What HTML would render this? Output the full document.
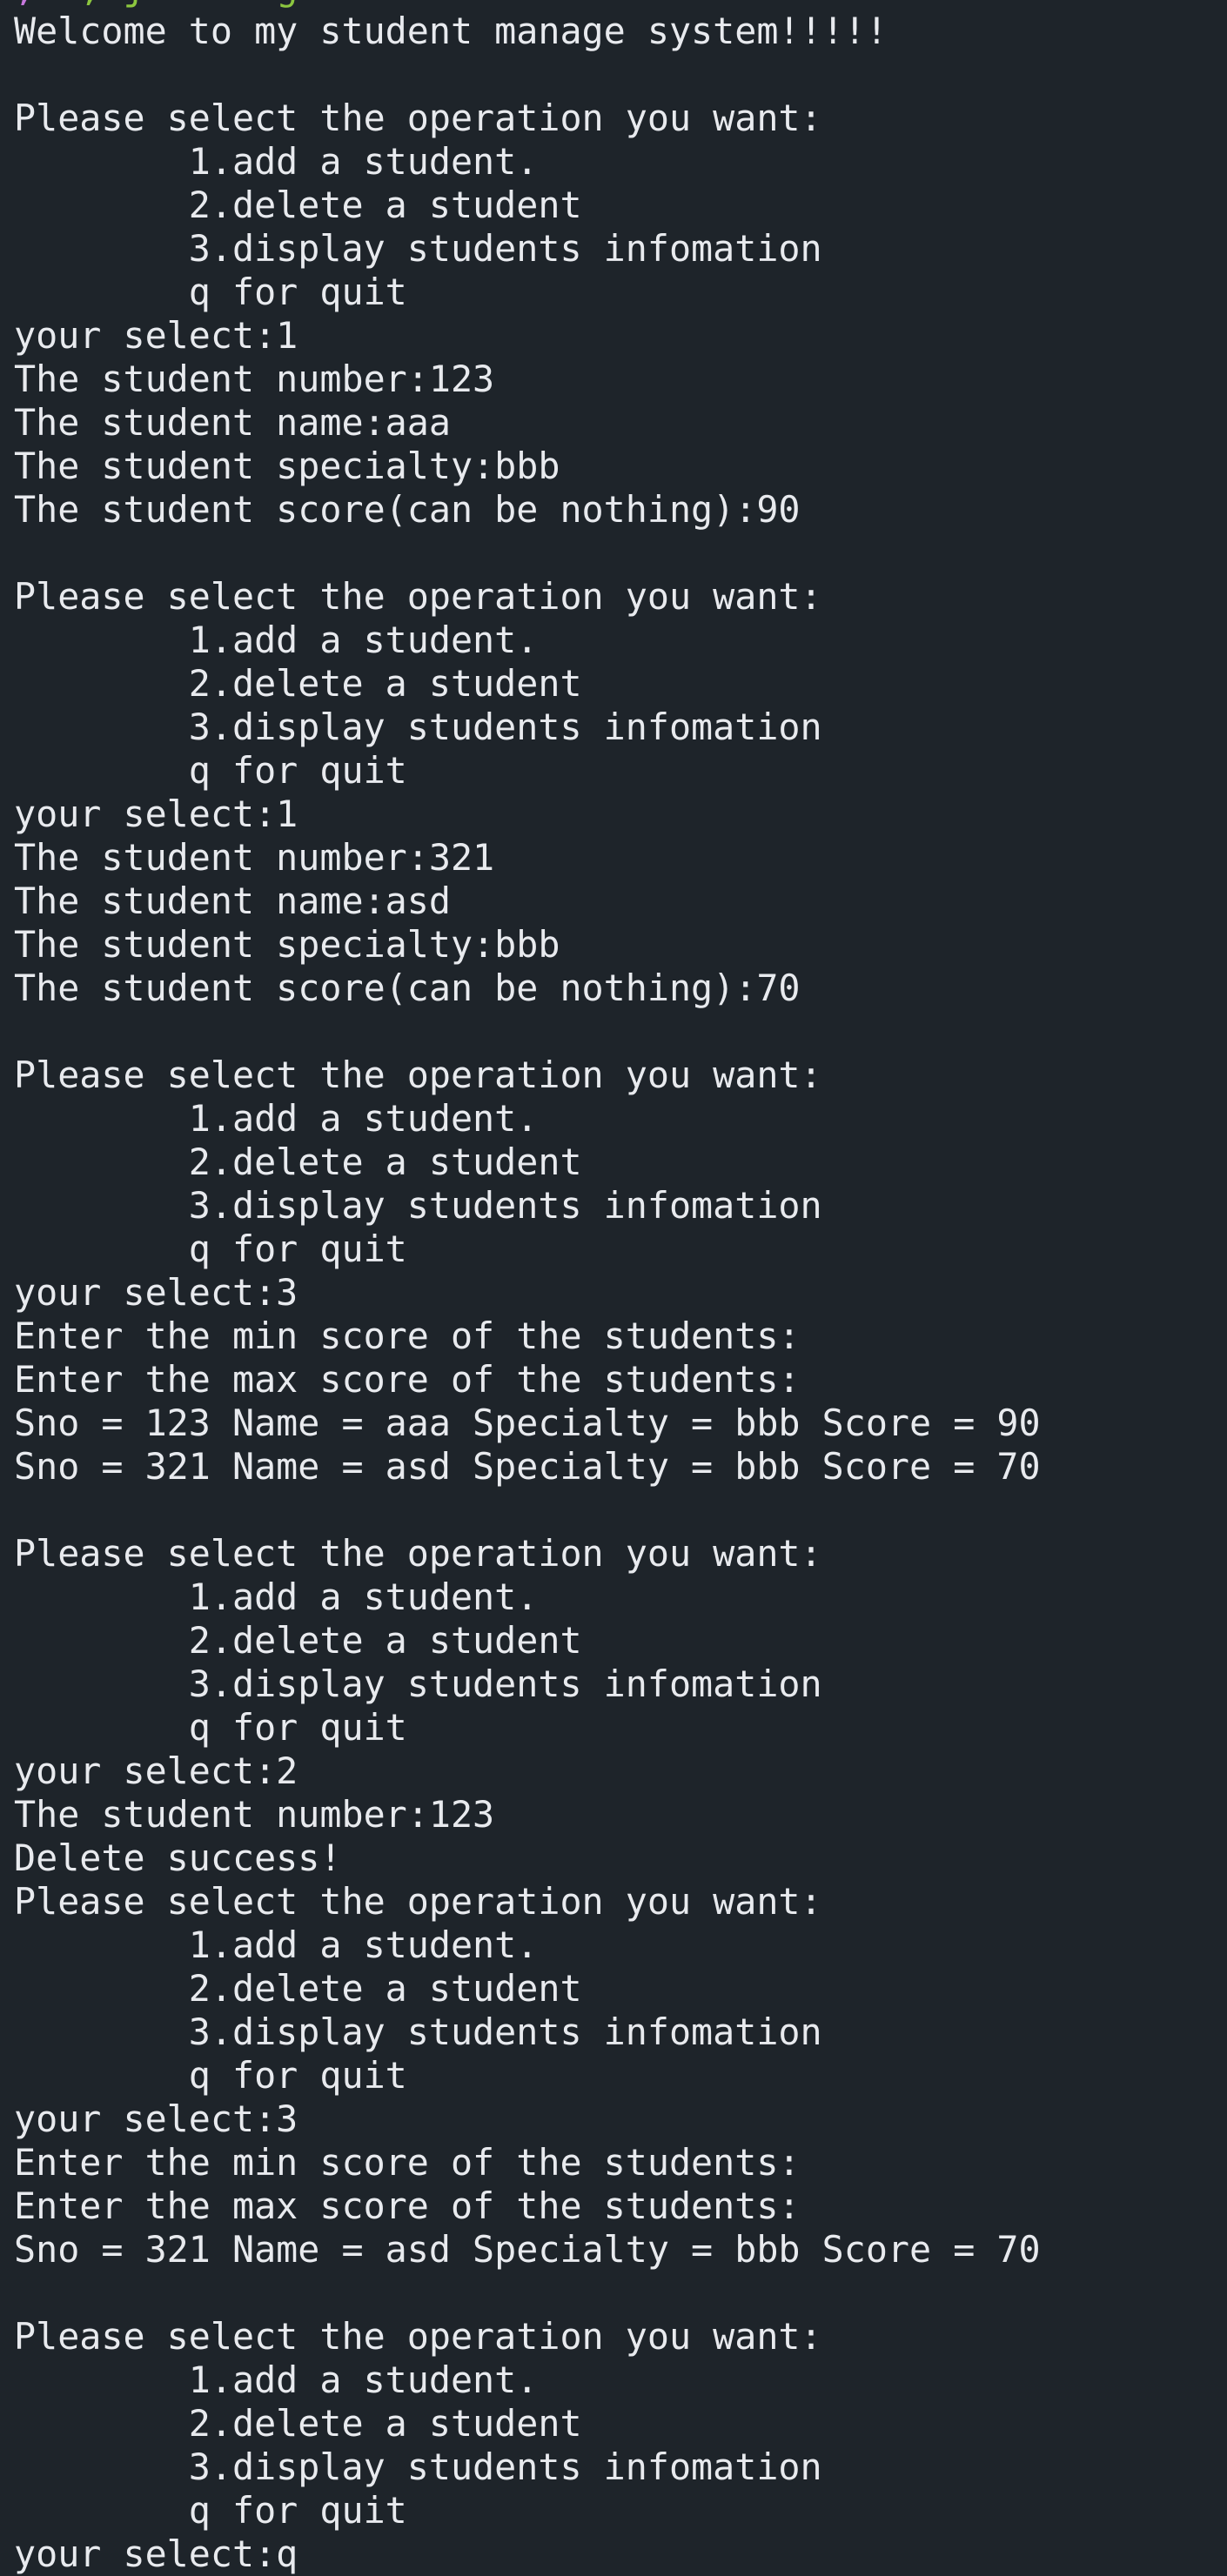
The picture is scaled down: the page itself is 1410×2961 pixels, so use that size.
<!DOCTYPE html>
<html><head><meta charset="utf-8"><style>
html,body{margin:0;padding:0;background:#1e242a;width:1410px;height:2960px;overflow:hidden}
pre{margin:0;position:absolute;left:16px;top:-39px;font-family:"DejaVu Sans Mono","Liberation Mono",monospace;font-size:41.7px;line-height:50px;color:#e8eaee;white-space:pre}
.p{color:#c678dd}.g{color:#8cc63f}
</style></head><body><pre><span class="p">,</span>  <span class="g">,</span> <span class="g">j</span>      <span class="g">g</span>
Welcome to my student manage system!!!!!

Please select the operation you want:
        1.add a student.
        2.delete a student
        3.display students infomation
        q for quit
your select:1
The student number:123
The student name:aaa
The student specialty:bbb
The student score(can be nothing):90

Please select the operation you want:
        1.add a student.
        2.delete a student
        3.display students infomation
        q for quit
your select:1
The student number:321
The student name:asd
The student specialty:bbb
The student score(can be nothing):70

Please select the operation you want:
        1.add a student.
        2.delete a student
        3.display students infomation
        q for quit
your select:3
Enter the min score of the students:
Enter the max score of the students:
Sno = 123 Name = aaa Specialty = bbb Score = 90
Sno = 321 Name = asd Specialty = bbb Score = 70

Please select the operation you want:
        1.add a student.
        2.delete a student
        3.display students infomation
        q for quit
your select:2
The student number:123
Delete success!
Please select the operation you want:
        1.add a student.
        2.delete a student
        3.display students infomation
        q for quit
your select:3
Enter the min score of the students:
Enter the max score of the students:
Sno = 321 Name = asd Specialty = bbb Score = 70

Please select the operation you want:
        1.add a student.
        2.delete a student
        3.display students infomation
        q for quit
your select:q</pre></body></html>
